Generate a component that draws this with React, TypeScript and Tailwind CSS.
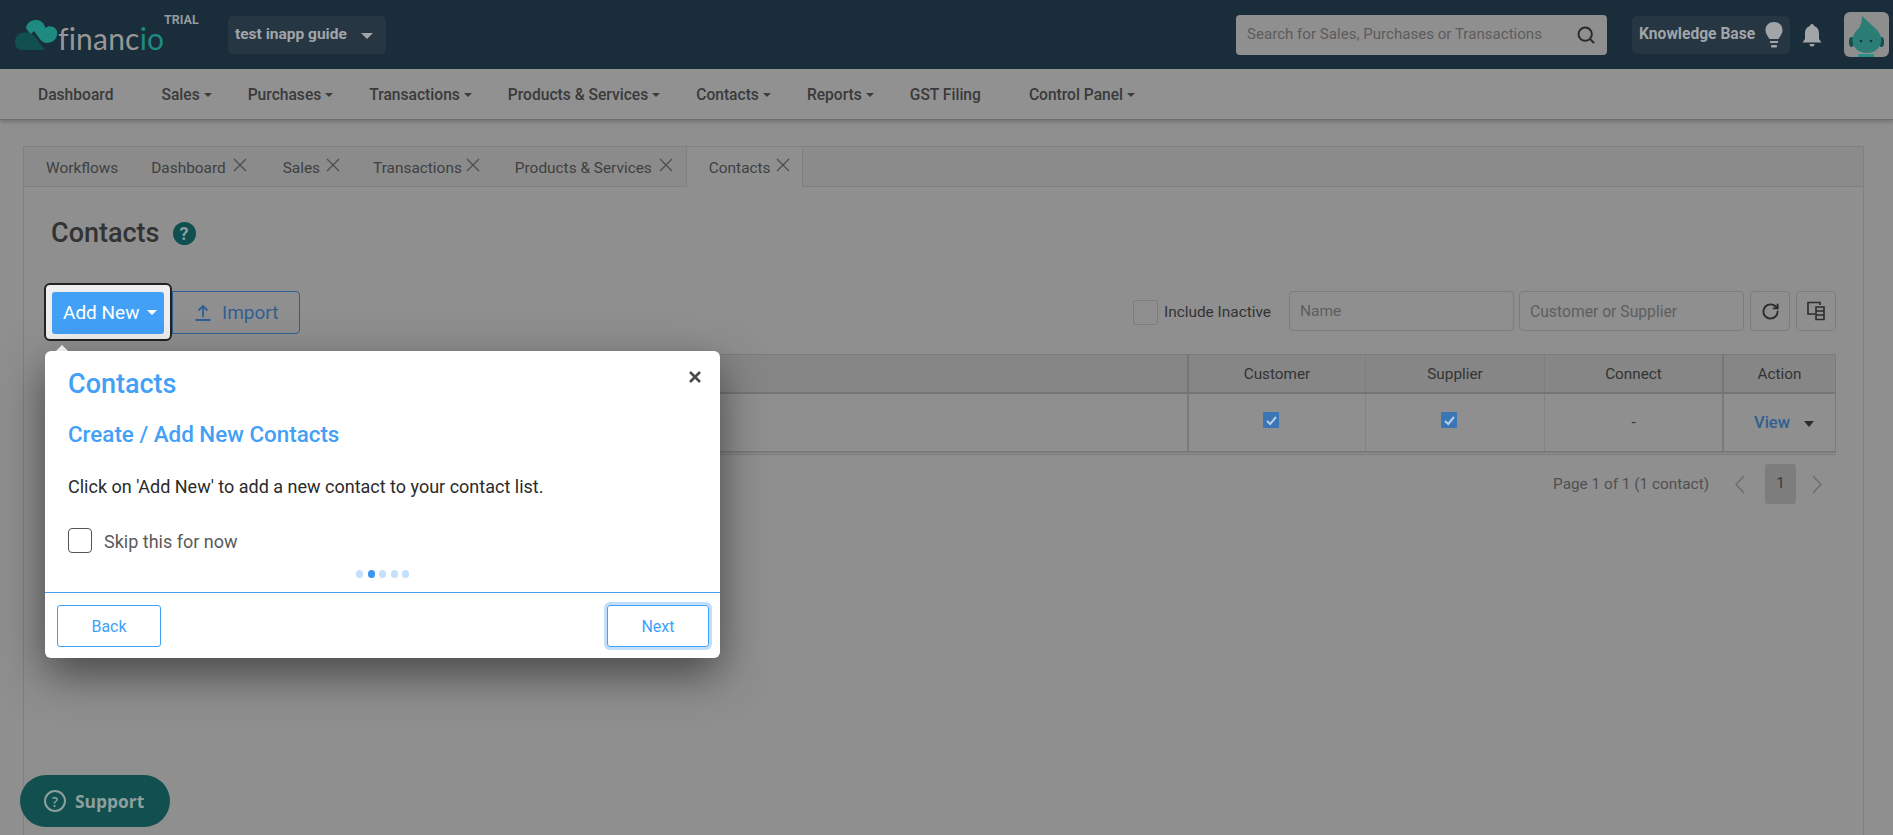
import React from "react";
import { RotateCw, Search } from "lucide-react";

const CloseIcon = ({ cls = "" }: { cls?: string }) => (
  <svg width="14" height="14" viewBox="0 0 14 14" fill="none" stroke="#4e4e4e" strokeWidth="1.3" className={`shrink-0 ${cls}`}>
    <path d="M1 1 L13 13 M13 1 L1 13" />
  </svg>
);

const NavItem = ({ label, caret = true, cls = "" }: { label: string; caret?: boolean; cls?: string }) => (
  <div className={`flex items-center pt-[4px] text-[15.6px] font-medium text-[#3a3a3a] ${cls}`}>
    {label}
    {caret && <span className="ml-[4px] -mt-[1px] border-x-[4px] border-t-[4px] border-x-transparent border-t-[#3d3d3d]" />}
  </div>
);

const Tab = ({ label, close = true, cls = "", closeCls = "ml-[7px]" }: { label: string; close?: boolean; cls?: string; closeCls?: string }) => (
  <div className={`flex items-center text-[15.4px] text-[#3f3f3f] ${cls}`}>
    <span className="pt-[4px]">{label}</span>
    {close && <CloseIcon cls={`${closeCls} -mt-[3px]`} />}
  </div>
);

const Logo = () => (
  <div className="flex items-end w-[150px] h-[32px] relative">
    <svg width="46" height="32" viewBox="0 0 46 32" className="shrink-0">
      <path d="M9 31 C3 31 1 27 1 23 C1 18 5 13 11 13.5 C16 12 21 16 24 22 L31 31 Z" fill="#125050" />
      <path d="M12 9 C13 3 18 1 22 1 C27 1 30 4 31.5 9 C34 6.5 40 6.5 42.5 11 C44.5 15 42.5 22 36 23.5 C31 25 28 23 25 19 L20 12 L17 15 L14 12 Z" fill="#1e8a80" />
    </svg>
    <span className="-ml-[2px] mb-[2px] text-[30px] leading-[22px] font-normal tracking-[0.2px] text-[#979797] font-['Lato',sans-serif]">
      financ<span className="text-[#1e8a80]">io</span>
    </span>
  </div>
);

const Avatar = () => (
  <div className="ml-[22px] w-[45px] h-[45px] rounded-[6px] bg-[#8e8e8e] overflow-hidden shrink-0">
    <svg width="45" height="45" viewBox="0 0 45 45">
      <ellipse cx="7.5" cy="30" rx="2.5" ry="5" fill="#124f4f" />
      <ellipse cx="37.5" cy="30" rx="2.5" ry="5" fill="#124f4f" />
      <path d="M14 42 h16 v3 h-16 Z" fill="#2b9187" />
      <path d="M18 4 L32 17 C37 22 38 27 37 31 C35 38 29 41 22.5 41 C15 41 9 36 8.5 29 C8 23 12 19 15 16 C17 13 18 8 18 4 Z" fill="#2b7d76" />
      <circle cx="17" cy="29" r="1.3" fill="#123c3c" />
      <circle cx="27" cy="29" r="1.3" fill="#123c3c" />
    </svg>
  </div>
);

const Checked = () => (
  <span className="w-[16px] h-[16px] bg-[#3a76b5] rounded-[1px] flex items-center justify-center">
    <svg width="13" height="13" viewBox="0 0 13 13" fill="none">
      <path d="M2 7 L5.2 10 L11 3" stroke="#b9cfe2" strokeWidth="2" />
    </svg>
  </span>
);

const Dot = ({ active = false }: { active?: boolean }) => (
  <span className={`w-[7px] h-[8px] rounded-full ${active ? "bg-[#3c95ee]" : "bg-[#c4e0fb]"}`} />
);

const Chevron = ({ d, cls = "" }: { d: string; cls?: string }) => (
  <svg width="12" height="19" viewBox="0 0 12 19" fill="none" stroke="#6c6c6c" strokeWidth="1.3" className={cls}>
    <path d={d} />
  </svg>
);

export default function App() {
  return (
    <div className="relative h-[835px] overflow-hidden bg-[#8f8f8f] font-['Roboto',sans-serif]">
      <header className="h-[69px] bg-[#1a2d3a] flex items-center pl-[14px] pr-[4px]">
        <Logo />
        <span className="-mt-[29px] text-[12.5px] leading-[12px] font-bold text-[#939a9e] w-[33px]">TRIAL</span>
        <div className="ml-[31px] w-[158px] h-[38px] rounded-[5px] bg-[#263642] flex items-center pl-[7px] text-[15.5px] font-bold text-[#a1a5a8]">
          test inapp guide
          <span className="ml-[14px] mt-[2px] border-x-[6px] border-t-[6px] border-x-transparent border-t-[#a1a5a8]" />
        </div>
        <div className="ml-auto w-[371px] h-[40px] rounded-[4px] bg-[#8f8f8f] flex items-center justify-between pl-[11px] pr-[11px] text-[15.1px] text-[#5c5c5c]">
          <span>Search for Sales, Purchases or Transactions</span>
          <Search className="w-[20px] h-[20px] text-[#2b2b2b]" strokeWidth={2.4} />
        </div>
        <div className="ml-[25px] w-[158px] h-[38px] rounded-[5px] bg-[#263642] flex items-center pl-[7px] text-[15.6px] font-bold text-[#a1a5a8]">
          Knowledge Base
          <svg width="18" height="28" viewBox="0 0 18 28" className="ml-[10px]" fill="#a1a5a8">
            <path d="M9 1 C4 1 0.5 4.5 0.5 9 C0.5 13 3 15 4.5 18 L13.5 18 C15 15 17.5 13 17.5 9 C17.5 4.5 14 1 9 1 Z" />
            <rect x="5" y="20" width="8" height="2" />
            <rect x="6" y="24" width="6" height="2.5" rx="1" />
          </svg>
        </div>
        <svg width="20" height="24" viewBox="0 0 20 24" className="ml-[12px] shrink-0" fill="#a1a5a8">
          <path d="M10 1 C11.2 1 12 1.8 12 3 C15.5 4 17 7 17 10.5 L17 16 L19.5 19.5 L0.5 19.5 L3 16 L3 10.5 C3 7 4.5 4 8 3 C8 1.8 8.8 1 10 1 Z" />
          <path d="M7.5 21 h5 a2.5 2.5 0 0 1 -5 0 Z" />
        </svg>
        <Avatar />
      </header>

      <nav className="h-[51px] bg-[#919191] border-b border-[#6e6e6e] shadow-[0_2px_4px_rgba(0,0,0,0.2)] flex items-center gap-9 pl-[38px]">
        <NavItem label="Dashboard" caret={false} cls="mr-3" />
        <NavItem label="Sales" />
        <NavItem label="Purchases" />
        <NavItem label="Transactions" />
        <NavItem label="Products & Services" />
        <NavItem label="Contacts" />
        <NavItem label="Reports" />
        <NavItem label="GST Filing" caret={false} cls="mr-3" />
        <NavItem label="Control Panel" />
      </nav>

      <main className="mt-[26px] ml-[23px] w-[1841px] h-[690px] border-x border-t border-[#808080]">
        <div className="h-[40px] bg-[#8b8b8b] border-b border-[#7f7f7f] flex items-stretch pl-[22px]">
          <div className="flex items-center gap-[33px] pr-[13px]">
            <Tab label="Workflows" close={false} />
            <Tab label="Dashboard" />
            <Tab label="Sales" cls="ml-[3px]" closeCls="ml-[6px]" />
            <Tab label="Transactions" closeCls="ml-[4px]" />
            <Tab label="Products & Services" cls="ml-[2px]" />
          </div>
          <div className="h-[40px] bg-[#8f8f8f] border-x border-[#7f7f7f] pl-[22px] pr-[12px] flex items-center">
            <Tab label="Contacts" closeCls="ml-[5px]" />
          </div>
        </div>

        <div className="pl-[27px] pr-[27px]">
          <div className="mt-[30px] h-[32px] flex items-center gap-[13px]">
            <h1 className="text-[27px] font-medium text-[#333]">Contacts</h1>
            <span className="w-[23px] h-[23px] rounded-full bg-[#0f4f4f] text-[#8f9f9f] flex items-center justify-center text-[18px] font-bold">?</span>
          </div>

          <div className="mt-[42px] flex items-start h-[43px]">
            <div className="relative w-[112px] h-[42px] ml-[1px] mt-[1px]">
              <div className="absolute -left-[8px] -right-[8px] -top-[9px] -bottom-[7px] rounded-[6px] bg-[#efefef] border-2 border-[#222]" />
              <button className="relative w-full h-full rounded-[3px] bg-[#42a0f7] text-white text-[19px] flex items-center pl-[11px]">
                <span className="pt-[1px]">Add New</span>
                <span className="ml-[8px] -mt-[1px] border-x-[5px] border-t-[5px] border-x-transparent border-t-white" />
              </button>
            </div>
            <button className="ml-[8px] w-[128px] h-[43px] rounded-r-[4px] border border-[#2f5f92] text-[#2f5f92] text-[19px] flex items-center pl-[21px]">
              <svg width="18" height="17" viewBox="0 0 18 17" fill="none" stroke="#2f5f92" strokeWidth="1.8">
                <path d="M9 13 V2 M4.5 6.5 L9 2 L13.5 6.5 M1.5 16 H16.5" />
              </svg>
              <span className="ml-[10px] pt-[1px]">Import</span>
            </button>
            <div className="ml-auto flex items-center">
              <span className="w-[25px] h-[25px] mt-[2px] rounded-[3px] border border-[#7c7c7c]" />
              <span className="ml-[6px] mt-[4px] text-[15.4px] text-[#333]">Include Inactive</span>
              <div className="ml-[18px] w-[225px] h-[40px] rounded-[4px] border border-[#7c7c7c] flex items-center pt-[2px] pl-[10px] text-[15.5px] text-[#5e5e5e]">Name</div>
              <div className="ml-[5px] w-[225px] h-[40px] rounded-[4px] border border-[#7c7c7c] flex items-center pt-[2px] pl-[10px] text-[15.7px] text-[#5e5e5e]">Customer or Supplier</div>
              <div className="ml-[6px] w-[40px] h-[40px] rounded-[4px] border border-[#7c7c7c] flex items-center justify-center">
                <RotateCw className="w-[19px] h-[19px] text-[#2c2c2c]" strokeWidth={2.4} />
              </div>
              <div className="ml-[6px] w-[40px] h-[40px] rounded-[4px] border border-[#7c7c7c] flex items-center justify-center">
                <svg width="20" height="20" viewBox="0 0 20 20" fill="none" stroke="#2c2c2c" strokeWidth="1.6">
                  <path d="M14 4 V1.5 H2 V13 H9" />
                  <path d="M10 6 H18 V18.5 H10 Z M10 10 H18 M10 14 H18" />
                </svg>
              </div>
            </div>
          </div>

          <div className="mt-[20px] border-x border-[#7b7b7b]">
            <div className="h-[40px] flex bg-[#868686] border-t border-[#7b7b7b] border-b-2 border-b-[#757575] text-[15.3px] text-[#333]">
              <div className="flex-1 border-r-2 border-[#767676]" />
              <div className="w-[177px] pt-[2px] border-r border-[#7e7e7e] flex items-center justify-center">Customer</div>
              <div className="w-[179px] pt-[2px] border-r border-[#7e7e7e] flex items-center justify-center">Supplier</div>
              <div className="w-[179px] pt-[2px] border-r-2 border-[#767676] flex items-center justify-center">Connect</div>
              <div className="w-[111px] pt-[2px] flex items-center justify-center">Action</div>
            </div>
            <div className="h-[59px] flex border-b-2 border-[#7a7a7a]">
              <div className="flex-1 border-r-2 border-[#7a7a7a]" />
              <div className="w-[177px] border-r border-[#828282] flex items-center justify-center pr-[12px] pb-[5px]"><Checked /></div>
              <div className="w-[179px] border-r border-[#828282] flex items-center justify-center pr-[12px] pb-[5px]"><Checked /></div>
              <div className="w-[179px] border-r-2 border-[#7a7a7a] flex items-center justify-center text-[15.3px] text-[#333]">-</div>
              <div className="w-[111px] flex items-center pt-[1px] pl-[30px] text-[16.5px] font-medium text-[#2f5f92]">
                View
                <span className="ml-[14px] mt-[2px] border-x-[5px] border-t-[6px] border-x-transparent border-t-[#2b2b2b]" />
              </div>
            </div>
          </div>
          <div className="h-px mt-px bg-[#7b7b7b]" />

          <div className="mt-[9px] flex items-center justify-end text-[15.35px] text-[#4f4f4f]">
            <span className="pt-[1px]">Page 1 of 1 (1 contact)</span>
            <Chevron d="M10 1 L2 9.5 L10 18" cls="ml-[25px]" />
            <span className="ml-[19px] w-[31px] h-[40px] rounded-[3px] bg-[#7d7d7d] text-[#3a3a3a] flex items-center justify-center">1</span>
            <Chevron d="M2 1 L10 9.5 L2 18" cls="ml-[15px]" />
            <span className="w-[13px]" />
          </div>
        </div>
      </main>

      {/* guide popover */}
      <span className="absolute left-[56px] top-[345px] border-x-[6px] border-b-[6px] border-x-transparent border-b-white" />
      <section className="absolute left-[45px] top-[351px] w-[675px] h-[307px] bg-white rounded-[6px] shadow-[0_16px_44px_rgba(0,0,0,0.5)] flex flex-col">
        <svg width="12" height="12" viewBox="0 0 12 12" stroke="#4a4a4a" strokeWidth="2.6" className="absolute right-[19px] top-[20px]">
          <path d="M1 1 L11 11 M11 1 L1 11" />
        </svg>
        <div className="px-[23px] flex-1">
          <h2 className="mt-[16px] text-[27px] leading-[34px] font-medium text-[#42a0f7]">Contacts</h2>
          <h3 className="mt-[17px] text-[22.4px] leading-[32px] font-medium text-[#42a0f7]">Create / Add New Contacts</h3>
          <p className="mt-[25px] text-[18px] leading-[24px] text-[#2b2b2b]">Click on 'Add New' to add a new contact to your contact list.</p>
          <div className="mt-[29px] flex items-center h-[25px]">
            <span className="w-[24px] h-[25px] rounded-[4px] border border-[#555]" />
            <span className="ml-[12px] pt-[2px] text-[18px] text-[#5a5a5a]">Skip this for now</span>
          </div>
          <div className="mt-[17px] flex justify-center gap-[4.5px]">
            <Dot /><Dot active /><Dot /><Dot /><Dot />
          </div>
        </div>
        <div className="h-[66px] pt-[1px] border-t border-[#4a9fea] flex items-center justify-between pl-[12px] pr-[11px] shrink-0">
          <button className="w-[104px] h-[42px] pt-[2px] rounded-[3px] border border-[#42a0f7] text-[#42a0f7] text-[16px]">Back</button>
          <button className="w-[102px] h-[42px] pt-[2px] rounded-[3px] border border-[#42a0f7] text-[#42a0f7] text-[16px] shadow-[0_0_0_3px_#c3defa]">Next</button>
        </div>
      </section>

      <div className="absolute left-[20px] top-[775px] w-[150px] h-[52px] rounded-[26px] bg-[#125050] flex items-center pl-[24px] text-[#8f9f9e] font-['Open_Sans',sans-serif] font-bold text-[17.4px]">
        <span className="w-[22px] h-[22px] rounded-full border-2 border-[#8f9f9e] flex items-center justify-center text-[14px] font-semibold shrink-0">?</span>
        <span className="ml-[9px]">Support</span>
      </div>
    </div>
  );
}
